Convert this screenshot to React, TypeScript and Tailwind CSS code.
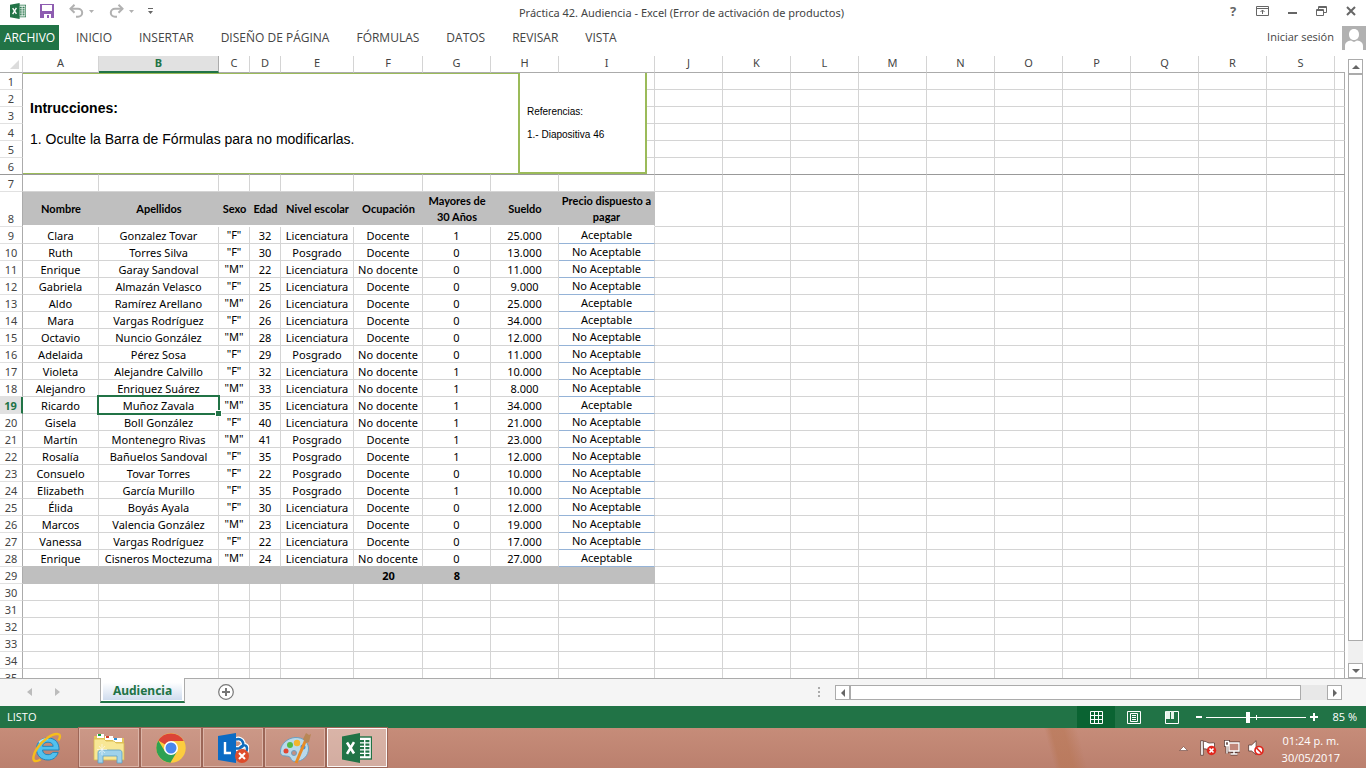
import type { ReactNode } from 'react';

type Person = [string, string, string, number, string, string, number, string, string];

const people: Person[] = [
  ['Clara', 'Gonzalez Tovar', '"F"', 32, 'Licenciatura', 'Docente', 1, '25.000', 'Aceptable'],
  ['Ruth', 'Torres Silva', '"F"', 30, 'Posgrado', 'Docente', 0, '13.000', 'No Aceptable'],
  ['Enrique', 'Garay Sandoval', '"M"', 22, 'Licenciatura', 'No docente', 0, '11.000', 'No Aceptable'],
  ['Gabriela', 'Almazán Velasco', '"F"', 25, 'Licenciatura', 'Docente', 0, '9.000', 'No Aceptable'],
  ['Aldo', 'Ramírez Arellano', '"M"', 26, 'Licenciatura', 'Docente', 0, '25.000', 'Aceptable'],
  ['Mara', 'Vargas Rodríguez', '"F"', 26, 'Licenciatura', 'Docente', 0, '34.000', 'Aceptable'],
  ['Octavio', 'Nuncio González', '"M"', 28, 'Licenciatura', 'Docente', 0, '12.000', 'No Aceptable'],
  ['Adelaida', 'Pérez Sosa', '"F"', 29, 'Posgrado', 'No docente', 0, '11.000', 'No Aceptable'],
  ['Violeta', 'Alejandre Calvillo', '"F"', 32, 'Licenciatura', 'No docente', 1, '10.000', 'No Aceptable'],
  ['Alejandro', 'Enriquez Suárez', '"M"', 33, 'Licenciatura', 'No docente', 1, '8.000', 'No Aceptable'],
  ['Ricardo', 'Muñoz Zavala', '"M"', 35, 'Licenciatura', 'No docente', 1, '34.000', 'Aceptable'],
  ['Gisela', 'Boll González', '"F"', 40, 'Licenciatura', 'No docente', 1, '21.000', 'No Aceptable'],
  ['Martín', 'Montenegro Rivas', '"M"', 41, 'Posgrado', 'Docente', 1, '23.000', 'No Aceptable'],
  ['Rosalía', 'Bañuelos Sandoval', '"F"', 35, 'Posgrado', 'Docente', 1, '12.000', 'No Aceptable'],
  ['Consuelo', 'Tovar Torres', '"F"', 22, 'Posgrado', 'Docente', 0, '10.000', 'No Aceptable'],
  ['Elizabeth', 'García Murillo', '"F"', 35, 'Posgrado', 'Docente', 1, '10.000', 'No Aceptable'],
  ['Élida', 'Boyás Ayala', '"F"', 30, 'Licenciatura', 'Docente', 0, '12.000', 'No Aceptable'],
  ['Marcos', 'Valencia González', '"M"', 23, 'Licenciatura', 'Docente', 0, '19.000', 'No Aceptable'],
  ['Vanessa', 'Vargas Rodríguez', '"F"', 22, 'Licenciatura', 'Docente', 0, '17.000', 'No Aceptable'],
  ['Enrique', 'Cisneros Moctezuma', '"M"', 24, 'Licenciatura', 'No docente', 0, '27.000', 'Aceptable'],
];

const headings = ['Nombre', 'Apellidos', 'Sexo', 'Edad', 'Nivel escolar', 'Ocupación', 'Mayores de 30 Años', 'Sueldo', 'Precio dispuesto a pagar'];
const letters = 'ABCDEFGHIJKLMNOPQRS'.split('');
const dataCols = ['w-[76px]', 'w-[120px]', 'w-[31px]', 'w-[31px]', 'w-[73px]', 'w-[69px]', 'w-[68px]', 'w-[68px]', 'w-[96px]'];
const tabs = ['INICIO', 'INSERTAR', 'DISEÑO DE PÁGINA', 'FÓRMULAS', 'DATOS', 'REVISAR', 'VISTA'];

function ExcelLogo({ className }: { className: string }) {
  return (
    <svg className={className} viewBox="0 0 30 30" aria-hidden="true">
      <rect x="16" y="4" width="13.5" height="22" fill="#fff" stroke="#217346" strokeWidth="1.4" />
      <g fill="#217346">
        {[7, 10.5, 14, 17.5, 21].map((y) => (
          <g key={y}>
            <rect x="18" y={y} width="4" height="2.2" />
            <rect x="23.4" y={y} width="4" height="2.2" />
          </g>
        ))}
      </g>
      <path d="M0 3.4 18 0v30L0 26.6z" fill="#217346" />
      <path d="M5 9.5 12 20.5M12 9.2 5 20.8" stroke="#fff" strokeWidth="2.6" fill="none" />
    </svg>
  );
}

function TitleBar() {
  return (
    <header className="flex h-[25px] shrink-0 items-center">
      <div className="flex w-[160px] items-center pb-[3px] pl-[10px] text-[#b1b1b1]">
        <ExcelLogo className="h-4 w-4" />
        <button aria-label="Guardar" className="ml-[14px]">
          <svg className="h-[14px] w-[14px]" viewBox="0 0 14 14">
            <path d="M0 0h14v14H0z" fill="#8e5db1" />
            <path d="M2 1h10v6H2zM4 10h7v4H9v-3H7v3H4z" fill="#fff" />
          </svg>
        </button>
        <button aria-label="Deshacer" className="ml-[15px] flex items-center gap-[5px]">
          <svg className="h-[14px] w-[15px]" viewBox="0 0 15 14" fill="none" stroke="currentColor" strokeWidth="2">
            <path d="M1.5 4.8H9a4.2 4 0 0 1 0 8H7" />
            <path d="M5.5.8 1.5 4.8l4 4" />
          </svg>
          <svg className="h-[3px] w-[5px]" viewBox="0 0 5 3"><path d="M0 0h5L2.5 3z" fill="currentColor" /></svg>
        </button>
        <button aria-label="Rehacer" className="ml-[15px] flex items-center gap-[5px]">
          <svg className="h-[14px] w-[15px]" viewBox="0 0 15 14" fill="none" stroke="currentColor" strokeWidth="2">
            <path d="M13.5 4.8H6a4.2 4 0 0 0 0 8h2" />
            <path d="m9.5.8 4 4-4 4" />
          </svg>
          <svg className="h-[3px] w-[5px]" viewBox="0 0 5 3"><path d="M0 0h5L2.5 3z" fill="currentColor" /></svg>
        </button>
        <button aria-label="Personalizar barra" className="ml-[14px]">
          <svg className="h-[6px] w-[5px]" viewBox="0 0 5 6"><path d="M0 0h5v1H0zM0 3h5L2.5 6z" fill="#666" /></svg>
        </button>
      </div>
      <h1 className="flex-1 text-center text-[11px] leading-[24px] text-[#444]">
        Práctica 42. Audiencia - Excel (Error de activación de productos)
      </h1>
      <div className="flex w-[163px] items-center justify-end pr-[10px] pb-[3px] text-[#666]">
        <button aria-label="Ayuda" className="w-[8px] text-[13px] leading-[22px] font-bold">?</button>
        <button aria-label="Opciones de la cinta" className="ml-[19px]">
          <svg className="h-[10px] w-[13px]" viewBox="0 0 13 10" fill="none" stroke="currentColor">
            <path d="M.5.5h12v9H.5zM.5 2.5h12M6.5 8V4M4.5 6l2-2 2 2" />
          </svg>
        </button>
        <button aria-label="Minimizar" className="ml-[19px]">
          <svg className="h-[10px] w-[9px]" viewBox="0 0 9 10"><path d="M0 6h9v2H0z" fill="currentColor" /></svg>
        </button>
        <button aria-label="Restaurar" className="ml-[19px]">
          <svg className="h-[10px] w-[11px]" viewBox="0 0 11 10" fill="none" stroke="currentColor">
            <path d="M.5 3.5h7v6h-7zM.5 4.5h7M2.5 3V.5h8v6H8M2.5 1.5h8" />
          </svg>
        </button>
        <button aria-label="Cerrar" className="ml-[19px]">
          <svg className="h-[10px] w-[10px]" viewBox="0 0 10 10"><path d="m1 1 8 8M9 1 1 9" stroke="currentColor" strokeWidth="2" /></svg>
        </button>
      </div>
    </header>
  );
}

function Ribbon() {
  return (
    <nav className="mb-[6px] flex h-[25px] shrink-0 items-center font-['Open_Sans','Noto_Sans',sans-serif] text-[12px] text-[#444]">
      <button className="h-full w-[59px] bg-[#217346] text-white">ARCHIVO</button>
      <div className="ml-[17px] flex gap-[27px]">
        {tabs.map((t) => (
          <button key={t}>{t}</button>
        ))}
      </div>
      <button className="mr-2 ml-auto text-[11px]">Iniciar sesión</button>
      <svg className="h-6 w-6 bg-[#b1b1b1]" viewBox="0 0 24 24" fill="#fff" role="img" aria-label="Cuenta">
        <path d="M12 3c3.4 0 5 2.4 5 5.5S15.2 14 12 14 7 11.500 7 8.500 8.600 3 12 3zM3 24v-4c0-3.500 2.500-5 6-5.500l3 1.500 3-1.500c3.500.5 6 2 6 5.500v4z" />
      </svg>
    </nav>
  );
}

function RowHead({ n, last }: { n: number; last?: boolean }) {
  const look = n === 19
    ? 'border-r-2 border-r-[#217346] bg-[#e1e1e1] font-bold text-[#217346]'
    : 'border-r border-r-[#ababab] font-normal text-[#444]';
  return (
    <th scope="row" className={`${look} border-b p-0 align-bottom text-[11px] leading-[15px] ${last ? 'border-b-[#999]' : 'border-b-[#e1e1e1]'}`}>
      {n}
    </th>
  );
}

function Blank({ from, dark }: { from: number; dark?: boolean }) {
  return (
    <>
      {Array.from({ length: 20 - from }, (_, i) => (
        <td key={i} className={`border-r border-b p-0 ${i === 19 - from ? 'border-r-[#ababab]' : 'border-r-[#d4d4d4]'} ${dark ? 'border-b-[#999]' : 'border-b-[#d4d4d4]'}`} />
      ))}
    </>
  );
}

function PersonRow({ person, n }: { person: Person; n: number }) {
  return (
    <tr className="h-[17px]">
      <RowHead n={n} />
      {person.map((value, c) => {
        const raised = c === 2 || c === 8;
        const selected = n === 19 && c === 1;
        const line = n === 28 && c < 8 ? 'border-b-[#bfbfbf]' : c === 8 ? 'border-b-[#95b3d7]' : 'border-b-[#d4d4d4]';
        return (
          <td key={c} className={`relative border-r border-b border-r-[#d4d4d4] p-0 text-center text-[11px] leading-[14px] whitespace-nowrap text-black ${line} ${raised ? 'align-middle' : 'align-bottom'}`}>
            {value}
            {selected && (
              <span className="absolute -inset-[2px] z-10 border-2 border-[#217346]">
                <span className="absolute -right-[4px] -bottom-[4px] h-[7px] w-[7px] border border-white bg-[#217346]" />
              </span>
            )}
          </td>
        );
      })}
      <Blank from={9} />
    </tr>
  );
}

function Sheet() {
  return (
    <div className="relative min-w-0 flex-1 overflow-hidden">
      <table className="w-full table-fixed border-separate border-spacing-0">
        <colgroup>
          <col className="w-[23px]" />
          {dataCols.map((w, i) => <col key={i} className={w} />)}
          {letters.slice(9).map((l) => <col key={l} className="w-[68px]" />)}
          <col />
        </colgroup>
        <thead>
          <tr className="h-[17px] text-[11px] leading-[14px] text-[#444]">
            <th className="border-r border-b border-r-[#d4d4d4] border-b-[#ababab] p-0">
              <svg className="ml-auto mr-[3px] h-[9px] w-[9px]" viewBox="0 0 9 9" role="img" aria-label="Seleccionar todo"><path d="M9 0v9H0z" fill="#dcdcdc" /></svg>
            </th>
            {letters.map((l) => (
              <th key={l} scope="col" className={l === 'B'
                ? 'border-r border-b-2 border-r-[#ababab] border-b-[#217346] bg-[#e1e1e1] p-0 align-top font-bold text-[#217346]'
                : 'border-r border-b border-r-[#d4d4d4] border-b-[#ababab] p-0 align-top font-normal'}>
                {l}
              </th>
            ))}
            <th className="border-b border-b-[#ababab] p-0" />
          </tr>
        </thead>
        <tbody>
          {[1, 2, 3, 4, 5, 6].map((n) => (
            <tr key={n} className="h-[17px]"><RowHead n={n} last={n === 6} /><Blank from={0} dark={n === 6} /></tr>
          ))}
          <tr className="h-[17px]"><RowHead n={7} /><Blank from={0} /></tr>
          <tr className="h-[35px]">
            <RowHead n={8} />
            {headings.map((h, c) => (
              <th key={h} scope="col" className={`border-b-2 border-b-white bg-[#bfbfbf] px-0 pt-px pb-0 text-[11px] leading-[16px] font-bold text-black ${c < 6 ? 'whitespace-nowrap' : ''} ${c === 8 ? 'border-r border-r-[#bfbfbf]' : ''} font-['Lato',sans-serif]`}>
                {h}
              </th>
            ))}
            <Blank from={9} />
          </tr>
          {people.map((p, i) => <PersonRow key={i} person={p} n={i + 9} />)}
          <tr className="h-[17px]">
            <RowHead n={29} />
            {dataCols.map((_, c) => (
              <td key={c} className="border-b border-b-[#bfbfbf] bg-[#bfbfbf] p-0 text-center align-bottom text-[11px] leading-[14px] font-bold text-black">
                {c === 5 ? '20' : c === 6 ? '8' : ''}
              </td>
            ))}
            <Blank from={9} />
          </tr>
          {[30, 31, 32, 33, 34, 35].map((n) => (
            <tr key={n} className="h-[17px]"><RowHead n={n} /><Blank from={0} /></tr>
          ))}
        </tbody>
      </table>

      <div className="absolute top-[17px] left-[23px] flex h-[101px] w-[624px] bg-white font-['Liberation_Sans',sans-serif] text-black">
        <section className="flex-1 border-y border-[#9bbb59] pt-[24px] pl-[7px] text-[14px] leading-[21px]">
          <h2 className="font-bold">Intrucciones:</h2>
          <p className="mt-[10px]">1. Oculte la Barra de Fórmulas para no modificarlas.</p>
        </section>
        <section className="w-[129px] border-x-2 border-b-2 border-[#9bbb59] pt-[31px] pl-[7px] text-[10px] leading-[15px]">
          <p>Referencias:</p>
          <p className="mt-2">1.- Diapositiva 46</p>
        </section>
      </div>
    </div>
  );
}

function ScrollButton({ label, d }: { label: string; d: string }) {
  return (
    <button aria-label={label} className="flex h-[15px] w-[15px] shrink-0 items-center justify-center border border-[#ababab] bg-white">
      <svg className="h-[8px] w-[8px]" viewBox="0 0 8 8"><path d={d} fill="#666" /></svg>
    </button>
  );
}

function SheetTabs() {
  return (
    <div className="flex h-[28px] shrink-0 bg-[#f5f5f5]">
      <div className="flex w-[100px] items-center gap-[23px] border-t border-[#ababab] pb-px pl-[27px] text-[#bcbcbc]">
        <button aria-label="Hoja anterior"><svg className="h-[8px] w-[5px]" viewBox="0 0 5 8"><path d="M5 0v8L0 4z" fill="currentColor" /></svg></button>
        <button aria-label="Hoja siguiente"><svg className="h-[8px] w-[5px]" viewBox="0 0 5 8"><path d="M0 0v8l5-4z" fill="currentColor" /></svg></button>
      </div>
      <button className="h-[25px] w-[85px] border-x border-b-2 border-x-[#ababab] border-b-[#217346] bg-white px-[2px] pb-px">
        <span className="block h-full bg-linear-to-b from-white from-20% to-[#cfdcee] text-center text-[12px] leading-[26px] font-bold text-[#217346]">Audiencia</span>
      </button>
      <div className="flex flex-1 items-center border-t border-[#ababab] pb-px pl-[33px]">
        <button aria-label="Hoja nueva">
          <svg className="h-4 w-4" viewBox="0 0 16 16" fill="none" stroke="#777">
            <circle cx="8" cy="8" r="7.3" fill="#fff" strokeWidth="1.2" />
            <path d="M8 4v8M4 8h8" strokeWidth="2" />
          </svg>
        </button>
      </div>
      <div className="flex w-[548px] items-center border-t border-[#ababab] pr-[24px]">
        <svg className="mr-[14px] h-[11px] w-[3px]" viewBox="0 0 3 11"><path d="M0 0h2v2H0zM0 4h2v2H0zM0 8h2v2H0z" fill="#ababab" /></svg>
        <ScrollButton label="Desplazar a la izquierda" d="M6 0v8L2 4z" />
        <div className="flex h-[15px] flex-1 bg-[#e8e8e8] pr-[26px]">
          <div className="flex-1 border border-[#ababab] bg-white" />
        </div>
        <ScrollButton label="Desplazar a la derecha" d="M2 0v8l4-4z" />
      </div>
    </div>
  );
}

function StatusBar() {
  return (
    <div className="flex h-[22px] shrink-0 items-center bg-[#217346] font-['Open_Sans','Noto_Sans',sans-serif] text-[11px] text-white">
      <span className="pl-[7px]">LISTO</span>
      <button aria-label="Normal" className="ml-auto flex h-full w-[38px] items-center justify-center bg-[#0a6332]">
        <svg className="h-[13px] w-[13px]" viewBox="0 0 13 13" fill="none" stroke="#fff"><path d="M.5.5h12v12H.5zM4.5 0v13M8.5 0v13M0 4.5h13M0 8.5h13" /></svg>
      </button>
      <button aria-label="Diseño de página" className="flex w-[38px] justify-center">
        <svg className="h-[13px] w-[14px]" viewBox="0 0 14 13" fill="none" stroke="#fff"><path d="M.5.5h13v12H.5zM3.5 2.5h7v8h-7zM5 4.5h4M5 6.5h4M5 8.5h4" /></svg>
      </button>
      <button aria-label="Vista previa de salto de página" className="flex w-[38px] justify-center">
        <svg className="h-[13px] w-[14px]" viewBox="0 0 14 13"><path d="M.5.5h13v12H.5z" fill="none" stroke="#fff" /><path d="M1 0h4v8H1zM6 0h3v8H6z" fill="#e6f2ea" /></svg>
      </button>
      <button aria-label="Alejar" className="ml-[5px] h-[2px] w-[6px] bg-white" />
      <input
        type="range"
        aria-label="Zoom"
        defaultValue={42}
        className="ml-1 h-[11px] w-[100px] appearance-none bg-[linear-gradient(#fff,#fff),linear-gradient(#fff,#fff)] bg-[length:100%_1px,1px_5px] bg-[position:0_5px,50px_3px] bg-no-repeat [&::-webkit-slider-thumb]:h-[11px] [&::-webkit-slider-thumb]:w-[4px] [&::-webkit-slider-thumb]:appearance-none [&::-webkit-slider-thumb]:bg-white"
      />
      <button aria-label="Acercar" className="ml-1">
        <svg className="h-2 w-2" viewBox="0 0 8 8"><path d="M3 0h2v3h3v2H5v3H3V5H0V3h3z" fill="#fff" /></svg>
      </button>
      <span className="w-[48px] pr-[9px] text-right">85 %</span>
    </div>
  );
}

function TaskButton({ label, active, children }: { label: string; active?: boolean; children: ReactNode }) {
  return (
    <button
      aria-label={label}
      className={`flex h-[39px] w-[60px] items-center justify-center border outline outline-[#9c6657] ${active ? 'border-white/90 bg-white/35' : 'border-[#dcb5a8] bg-white/10'}`}
    >
      {children}
    </button>
  );
}

function Taskbar() {
  return (
    <footer className="flex h-[40px] shrink-0 bg-[linear-gradient(75deg,transparent_76.6%,#b8765499_77.1%,#b8765499_78%,transparent_79%),linear-gradient(#c68c79,#bb806e)]">
      <button aria-label="Internet Explorer" className="flex w-[79px] items-center justify-center pl-[14px]">
        <svg className="h-8 w-8" viewBox="0 0 32 32" fill="none">
          <path d="M28 18H11.5c.3 3.2 2.5 4.7 5.5 4.7 2 0 3.8-.8 4.7-2.3h5.500C25.500 25.500 21.800 28 17 28 10 28 5.500 23.500 5.500 17S10.200 6 17 6c7.500 0 11.300 5 11 12z" fill="#52c1ee" stroke="#1f87bd" />
          <path d="M11.5 14.3h10.700c-.3-2.700-2.200-4.100-5.200-4.100-2.900 0-5 1.400-5.500 4.100z" fill="#c68c79" stroke="#1f87bd" />
          <path d="M8 10.5c2-2.300 5-3.500 8.500-3.500" stroke="#a8e6fb" strokeWidth="1.8" />
          <path d="M27.500 8.500c2-3.500 2-5.800-.3-6.300C21.500 1 11.500 8 6 16.500 2 22.500 1.300 28 4 29c1.300.5 3.300-.2 5.500-1.500" stroke="#f6bd1c" strokeWidth="2.4" />
        </svg>
      </button>
      <div className="flex gap-[2px]">
        <TaskButton label="Explorador de archivos">
          <svg className="h-8 w-8" viewBox="0 0 32 32">
            <path d="M1 4h10l2 2h18v22H1z" fill="#e4c65c" />
            <path d="M4 2h7v4H4zM12 4h8v4h-8zM20 6h9v4h-9z" fill="#fff" />
            <path d="M5 2h3v2H5z" fill="#15a33b" /><path d="M13 4h3v2h-3z" fill="#d6402b" /><path d="M21 6h3v2h-3z" fill="#2b8fd8" />
            <path d="M1 7h10l2 2h8l2 2h8v17H1z" fill="#f8e795" stroke="#d7b94b" strokeWidth=".8" />
            <path d="M5 21c0-2 1-3 3-3h18c2 0 3 1 3 3v10h-5v-7H10v7H5z" fill="#9fd2ea" stroke="#5b9fc4" strokeWidth=".8" />
            <path d="M9 12v11M4 17.500h10M6 14l6 7M12 14l-6 7" stroke="#fff" strokeOpacity=".7" strokeWidth=".8" />
          </svg>
        </TaskButton>
        <TaskButton label="Google Chrome">
          <svg className="h-[30px] w-[30px]" viewBox="0 0 30 30">
            <circle cx="15" cy="15" r="14.7" fill="#fccc3f" />
            <path d="M15 15 2.300 7.600A14.700 14.700 0 0 1 27.800 8H15z" fill="#dc4437" />
            <path d="M2.300 7.600A14.700 14.700 0 0 0 14.400 29.700L21 18.500 15 15 9 18.500z" fill="#2ea152" />
            <circle cx="15" cy="15" r="7" fill="#fff" /><circle cx="15" cy="15" r="5.5" fill="#4a87ee" />
          </svg>
        </TaskButton>
        <TaskButton label="Lync">
          <svg className="h-8 w-8" viewBox="0 0 32 32">
            <path d="M19 7.500c3-1 6 0 7 3s-1 5-4 6h-3M23 15.500c4-4 7-2 7 1s-2 5-5 5" fill="none" stroke="#fff" strokeWidth="5" />
            <path d="M19 7.500c3-1 6 0 7 3s-1 5-4 6h-3M23 15.500c4-4 7-2 7 1s-2 5-5 5" fill="none" stroke="#0f6dbe" strokeWidth="2.5" />
            <path d="M1 4 19 1v30L1 28z" fill="#0b6bc4" />
            <path d="M8 10v11h6" fill="none" stroke="#fff" strokeWidth="2.4" />
            <circle cx="25" cy="24" r="7" fill="#dd4d2c" /><path d="m22 21 6 6M28 21l-6 6" stroke="#fff" strokeWidth="2" />
          </svg>
        </TaskButton>
        <TaskButton label="Paint">
          <svg className="h-8 w-8" viewBox="0 0 32 32">
            <path d="M13 6C21 4 29 8 29.500 16c.4 8-6 13.500-13 13.500-5 0-4-4-6.500-5-3-1-8 .5-8.500-4C1 14 6 8 13 6z" fill="#b9d9ea" stroke="#6ba0c2" />
            <circle cx="7" cy="19" r="2.5" fill="#e24631" /><circle cx="11" cy="13" r="3" fill="#55b946" /><circle cx="18" cy="11" r="3.2" fill="#f4b52c" /><circle cx="24" cy="15" r="2.5" fill="#3f8edb" />
            <circle cx="15" cy="21" r="2.5" fill="#c49082" stroke="#6ba0c2" />
            <path d="M28 5 17 31" stroke="#e88b26" strokeWidth="3" />
            <path d="m24 7 3-6 3 2 2-1-2 8-3 1z" fill="#b98755" />
          </svg>
        </TaskButton>
        <TaskButton label="Excel" active>
          <ExcelLogo className="h-[30px] w-[30px]" />
        </TaskButton>
      </div>
      <div className="ml-auto flex items-center pr-[26px]">
        <button aria-label="Mostrar iconos ocultos"><svg className="h-[5px] w-[9px]" viewBox="0 0 9 5"><path d="M.5 4.500 4.500.5l4 4z" fill="#fff" stroke="#66413a" strokeWidth=".6" /></svg></button>
        <svg className="ml-[12px] h-4 w-[17px]" viewBox="0 0 17 16" role="img" aria-label="Centro de actividades">
          <path d="M.7.7h2.600v14.600H.7z" fill="#fff" stroke="#5b3b34" strokeWidth=".8" />
          <path d="M3.300 1.500C6 .5 7 3 9.500 3c2 0 3-.5 5 0v7c-3 .5-4-.5-6-.5-2 0-3-1-5-.5z" fill="#fff" stroke="#5b3b34" strokeWidth=".8" />
          <circle cx="11.5" cy="10.5" r="4.7" fill="#e0271e" /><path d="m9.500 8.500 4 4M13.500 8.500l-4 4" stroke="#fff" strokeWidth="1.7" />
        </svg>
        <svg className="ml-[7px] h-4 w-4" viewBox="0 0 16 16" fill="none" role="img" aria-label="Red">
          <path d="M5 3h10v8H5zM10 11v3M6.500 14h7M1.500 1.500h3v4h-3zM3 5.500v8" stroke="#5b3b34" strokeWidth="3" />
          <path d="M5 3h10v8H5z" fill="#c0877a" />
          <path d="M5 3h10v8H5zM10 11v3M6.500 14h7M1.500 1.500h3v4h-3zM3 5.500v8" stroke="#fff" strokeWidth="1.4" />
        </svg>
        <svg className="ml-2 h-4 w-4" viewBox="0 0 16 16" role="img" aria-label="Sonido silenciado">
          <path d="M.6 5h3l4.500-4.300v14L3.600 11h-3z" fill="#fff" stroke="#5b3b34" strokeWidth=".8" />
          <circle cx="11" cy="10.5" r="4" fill="#fff" stroke="#e0271e" strokeWidth="1.7" /><path d="m8.500 8 5 5" stroke="#e0271e" strokeWidth="1.7" />
        </svg>
        <div className="ml-[18px] pt-px text-center font-['Open_Sans','Noto_Sans',sans-serif] text-[11px] leading-[17px] text-white">
          <p>01:24 p. m.</p>
          <p>30/05/2017</p>
        </div>
      </div>
    </footer>
  );
}

export default function App() {
  return (
    <div className="flex h-screen flex-col overflow-hidden bg-white font-['Noto_Sans','Open_Sans',sans-serif]">
      <TitleBar />
      <Ribbon />
      <main className="flex min-h-0 flex-1">
        <Sheet />
        <div className="flex w-[21px] shrink-0 flex-col items-center pt-[3px]">
          <ScrollButton label="Desplazar hacia arriba" d="M0 6h8L4 2z" />
          <div className="flex w-[15px] flex-1 flex-col bg-[#f0f0f0] pb-[22px]">
            <div className="flex-1 border border-[#ababab] bg-white" />
          </div>
          <ScrollButton label="Desplazar hacia abajo" d="M0 2h8L4 6z" />
        </div>
      </main>
      <SheetTabs />
      <StatusBar />
      <Taskbar />
    </div>
  );
}
